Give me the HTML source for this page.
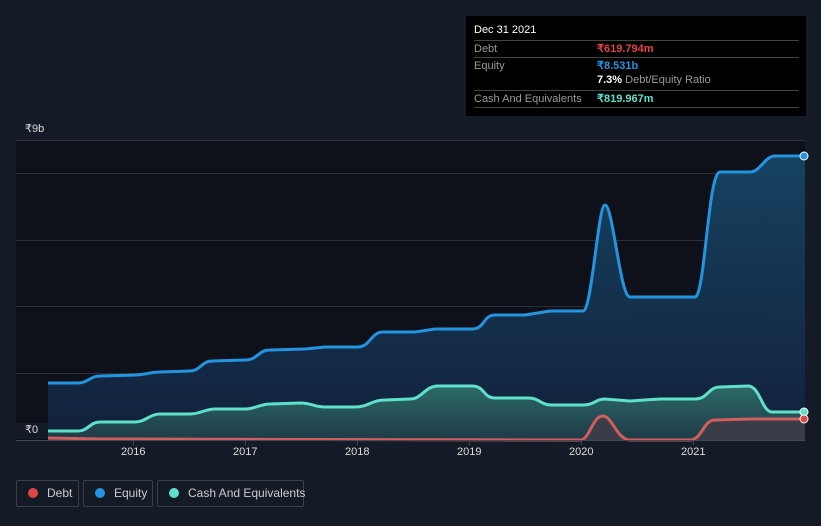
<!DOCTYPE html>
<html><head><style>
html,body{margin:0;width:821px;height:526px;overflow:hidden}
body{background:#151b26;font-family:"Liberation Sans",sans-serif;position:relative}
.tip{position:absolute;left:466px;top:16px;width:340px;height:100px;background:#000;color:#fff;font-size:11px}
.row{position:absolute;left:8px;width:325px;border-top:1px solid #444;height:16px;line-height:16px;color:#999}
.leg{position:absolute;top:480px;height:27px;border:1px solid #3a404b;border-radius:2px;color:#ccc;font-size:12px;line-height:25px;box-sizing:border-box;white-space:nowrap}
.leg i{display:inline-block;width:10px;height:10px;border-radius:50%;margin:0 9px 0 11px;vertical-align:-1px}
.ax{position:absolute;top:446px;color:#ddd;font-size:11px}
</style></head><body>
<svg width="821" height="526" style="position:absolute;left:0;top:0">
<defs>
<linearGradient id="ge" x1="0" y1="0" x2="0" y2="1"><stop offset="0" stop-color="#164261"/><stop offset="1" stop-color="#12203a"/></linearGradient>
<linearGradient id="gc" x1="0" y1="0" x2="0" y2="1"><stop offset="0" stop-color="#2c6a68"/><stop offset="1" stop-color="#1e3a48"/></linearGradient>
</defs>
<rect x="16" y="140" width="789" height="300" fill="#0e1119"/>
<g stroke="#2a2f38" stroke-width="1">
<line x1="16" y1="140.5" x2="805" y2="140.5"/><line x1="16" y1="173.5" x2="805" y2="173.5"/><line x1="16" y1="240.5" x2="805" y2="240.5"/><line x1="16" y1="306.5" x2="805" y2="306.5"/><line x1="16" y1="373.5" x2="805" y2="373.5"/>
</g>
<path d="M48,383 L78,383 C88,383 90,376 100,376 L135,375 C145,375 150,372 160,372 L190,371 C200,371 202,361 212,361 L245,360 C258,360 258,350 270,350 L305,349 L325,347 L358,347 C370,347 371,332 383,332 L415,332 L435,329 L472,329 C485,329 483,315 495,315 L525,315 L550,311 L583,311 C592,311 598,205 605,205 C613,205 620,297 630,297 L695,297 C705,297 708,172 720,172 L750,172 C760,172 765,156 775,156 L805,156 L805,440 L48,440Z" fill="url(#ge)"/>
<path d="M48,431 L78,431 C88,431 90,422 100,422 L135,422 C145,422 150,414 160,414 L190,414 C200,414 205,409 215,409 L245,409 C255,409 260,404 270,404 L300,403 C312,403 314,407 325,407 L355,407 C368,407 372,400 385,400 L410,399 C422,399 425,386 438,386 L472,386 C485,386 483,398 495,398 L528,398 C540,398 540,405 552,405 L583,405 C595,405 595,399 605,399 L630,401 L660,399 L695,399 C708,399 708,387 720,387 L748,386 C760,386 762,412 772,412 L805,412 L805,440 L48,440Z" fill="url(#gc)"/>
<path d="M48,438 L100,439 L580,440 C590,440 592,416 603,416 C612,416 617,440 630,440 L690,440 C702,440 703,420 715,420 L750,419 L805,419 L805,440 L48,440Z" fill="#3a3d47"/>
<path d="M48,383 L78,383 C88,383 90,376 100,376 L135,375 C145,375 150,372 160,372 L190,371 C200,371 202,361 212,361 L245,360 C258,360 258,350 270,350 L305,349 L325,347 L358,347 C370,347 371,332 383,332 L415,332 L435,329 L472,329 C485,329 483,315 495,315 L525,315 L550,311 L583,311 C592,311 598,205 605,205 C613,205 620,297 630,297 L695,297 C705,297 708,172 720,172 L750,172 C760,172 765,156 775,156 L805,156" fill="none" stroke="#2394e0" stroke-width="3"/>
<path d="M48,431 L78,431 C88,431 90,422 100,422 L135,422 C145,422 150,414 160,414 L190,414 C200,414 205,409 215,409 L245,409 C255,409 260,404 270,404 L300,403 C312,403 314,407 325,407 L355,407 C368,407 372,400 385,400 L410,399 C422,399 425,386 438,386 L472,386 C485,386 483,398 495,398 L528,398 C540,398 540,405 552,405 L583,405 C595,405 595,399 605,399 L630,401 L660,399 L695,399 C708,399 708,387 720,387 L748,386 C760,386 762,412 772,412 L805,412" fill="none" stroke="#5ee0cb" stroke-width="3"/>
<path d="M48,438 L100,439 L580,440 C590,440 592,416 603,416 C612,416 617,440 630,440 L690,440 C702,440 703,420 715,420 L750,419 L805,419" fill="none" stroke="#d05e5e" stroke-width="3"/>
<line x1="16" y1="440.5" x2="805" y2="440.5" stroke="#444a55"/>
<g stroke="#444a55"><line x1="133.5" y1="440" x2="133.5" y2="445"/><line x1="245.5" y1="440" x2="245.5" y2="445"/><line x1="357.5" y1="440" x2="357.5" y2="445"/><line x1="469.5" y1="440" x2="469.5" y2="445"/><line x1="581.5" y1="440" x2="581.5" y2="445"/><line x1="693.5" y1="440" x2="693.5" y2="445"/></g>
<circle cx="804" cy="156" r="4" fill="#2394e0" stroke="#fff" stroke-width="1"/>
<circle cx="804" cy="412" r="4" fill="#5ee0cb" stroke="#fff" stroke-width="1"/>
<circle cx="804" cy="419" r="4" fill="#e04545" stroke="#fff" stroke-width="1"/>
<rect x="16" y="423" width="32" height="16" fill="#151b26"/>
</svg>
<div style="position:absolute;left:25px;top:122px;color:#ddd;font-size:11px">₹9b</div>
<div style="position:absolute;left:25px;top:423px;color:#ddd;font-size:11px">₹0</div>
<div class="ax" style="left:121px">2016</div><div class="ax" style="left:233px">2017</div><div class="ax" style="left:345px">2018</div><div class="ax" style="left:457px">2019</div><div class="ax" style="left:569px">2020</div><div class="ax" style="left:681px">2021</div>
<div class="tip">
<div style="position:absolute;left:8px;top:8px;font-size:11px;color:#fff">Dec 31 2021</div>
<div class="row" style="top:24px">Debt<span style="position:absolute;left:123px;color:#e04545;font-weight:bold">₹619.794m</span></div>
<div class="row" style="top:41px">Equity<span style="position:absolute;left:123px;color:#2394e0;font-weight:bold">₹8.531b</span></div>
<div style="position:absolute;left:131px;top:58px;color:#999"><b style="color:#fff">7.3%</b> Debt/Equity Ratio</div>
<div class="row" style="top:74px;border-bottom:1px solid #444">Cash And Equivalents<span style="position:absolute;left:123px;color:#5ee0cb;font-weight:bold">₹819.967m</span></div>
</div>
<div class="leg" style="left:16px;width:63px"><i style="background:#e04545"></i>Debt</div>
<div class="leg" style="left:83px;width:70px"><i style="background:#2394e0"></i>Equity</div>
<div class="leg" style="left:157px;width:147px"><i style="background:#5ee0cb"></i>Cash And Equivalents</div>
</body></html>
